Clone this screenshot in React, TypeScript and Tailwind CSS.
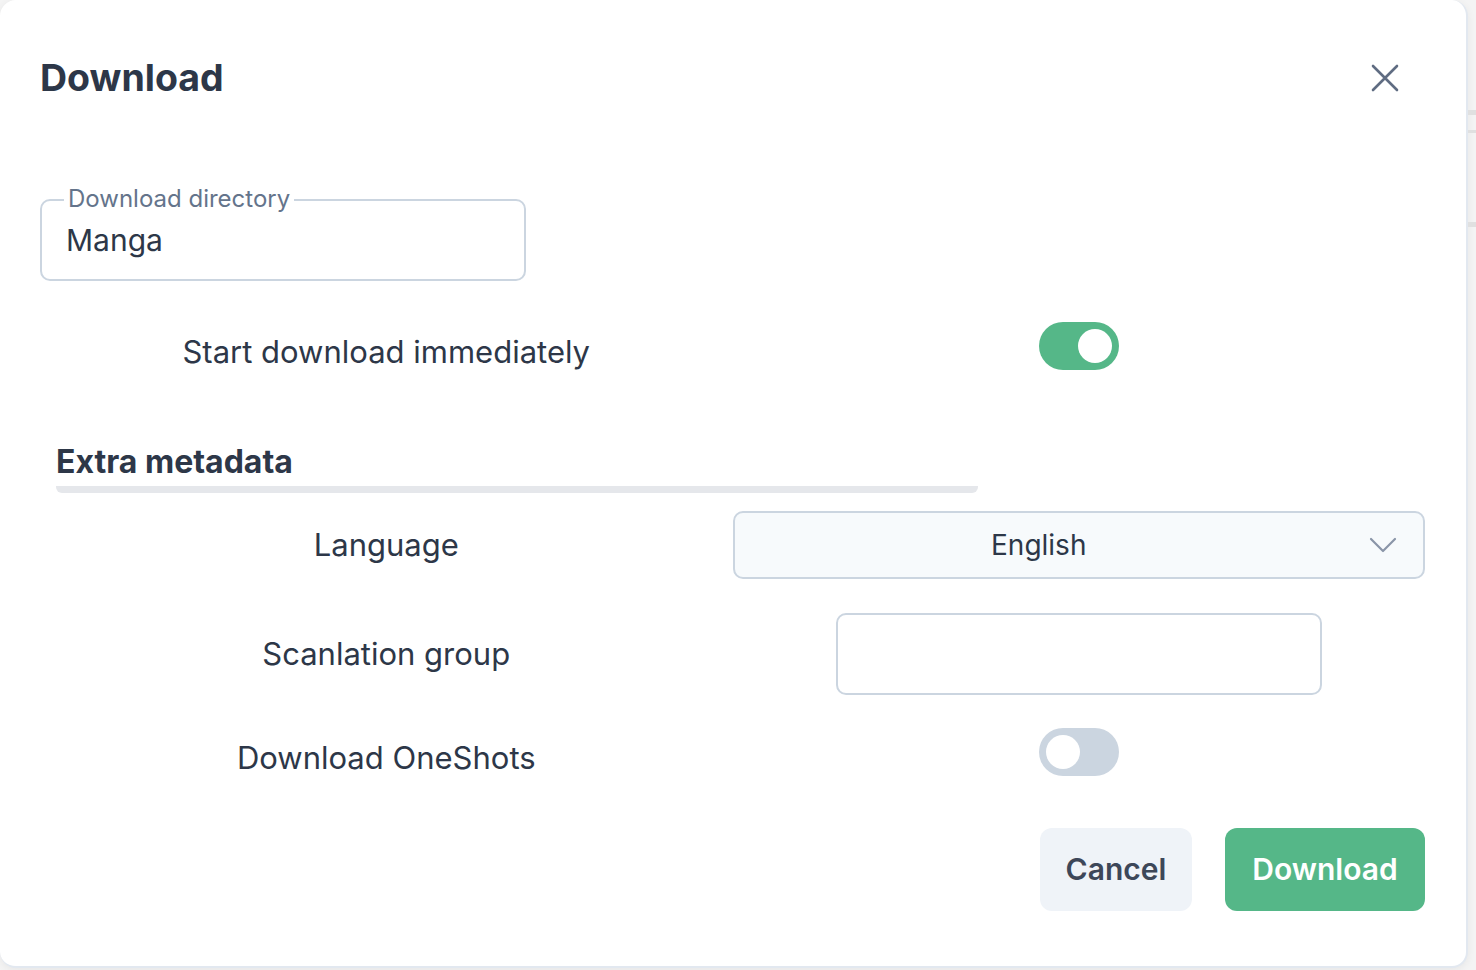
import React from "react";

function Toggle({ on }: { on: boolean }) {
  return (
    <div
      className={`w-[80px] h-[48px] rounded-full p-[7px] flex items-center ${
        on ? "bg-[#55b788] justify-end" : "bg-[#cbd5e0] justify-start"
      }`}
    >
      <div className="w-[34px] h-[34px] rounded-full bg-white" />
    </div>
  );
}

function Row({ label, children, shift = false }: { label: string; children: React.ReactNode; shift?: boolean }) {
  return (
    <div className="grid grid-cols-2 items-center">
      <div className={`text-center text-[31px] text-[#2d3748] leading-[36px] ${shift ? "pt-[12px]" : ""}`}>{label}</div>
      <div className="flex justify-center">{children}</div>
    </div>
  );
}

export default function App() {
  return (
    <div className="w-[1476px] h-[970px] bg-[#f4f4f4] flex font-['Inter',sans-serif] overflow-hidden">
      {/* Modal */}
      <div className="w-[1468px] h-[968px] bg-white rounded-[16px] border-r-2 border-b-2 border-[#e2e8f0] shadow-[0_2px_8px_rgba(0,0,0,0.06)] flex flex-col pl-[40px] pr-[41px] flex-shrink-0">
        {/* Header */}
        <div className="h-[156px] flex items-center justify-between">
          <h1 className="text-[37.5px] font-bold text-[#2d3748] leading-none">Download</h1>
          <button className="w-[40px] h-[40px] flex items-center justify-center mr-[20px] text-[#5f6c82]">
            <svg width="28" height="28" viewBox="0 0 28 28" fill="none" stroke="currentColor" strokeWidth="2.6" strokeLinecap="round">
              <path d="M2 2L26 26M26 2L2 26" />
            </svg>
          </button>
        </div>

        {/* Download directory */}
        <div className="relative mt-[43px] w-[486px] h-[82px] border-2 border-[#cbd5e0] rounded-[10px] flex items-center pl-[24px]">
          <span className="absolute -top-[16px] left-[22px] bg-white px-[4px] text-[24px] leading-[28px] text-[#64748b]">
            Download directory
          </span>
          <span className="text-[30px] text-[#2d3748]">Manga</span>
        </div>

        {/* Start immediately */}
        <div className="mt-[41px]">
          <Row label="Start download immediately" shift>
            <Toggle on />
          </Row>
        </div>

        {/* Extra metadata */}
        <div className="mt-[73px] ml-[16px]">
          <h2 className="text-[32px] font-bold text-[#2d3748] leading-[37px]">Extra metadata</h2>
          <div className="mt-[6px] w-[922px] h-[7px] bg-[#e5e7eb] rounded-b-[6px]" />
        </div>

        {/* Language */}
        <div className="mt-[18px]">
          <Row label="Language">
            <div className="w-[692px] h-[68px] bg-[#f7fafc] border-2 border-[#cbd5e0] rounded-[10px] flex items-center relative">
              <span className="flex-1 text-center text-[28px] text-[#2d3748] pr-[80px]">English</span>
              <svg className="absolute right-[26px]" width="28" height="16" viewBox="0 0 28 16" fill="none" stroke="#8a95a8" strokeWidth="2.2" strokeLinecap="round" strokeLinejoin="round">
                <path d="M2 2L14 14L26 2" />
              </svg>
            </div>
          </Row>
        </div>

        {/* Scanlation group */}
        <div className="mt-[34px]">
          <Row label="Scanlation group">
            <div className="w-[486px] h-[82px] border-2 border-[#cbd5e0] rounded-[10px] bg-white" />
          </Row>
        </div>

        {/* OneShots */}
        <div className="mt-[33px]">
          <Row label="Download OneShots" shift>
            <Toggle on={false} />
          </Row>
        </div>

        {/* Footer */}
        <div className="mt-[52px] flex justify-end gap-[33px]">
          <button className="w-[152px] h-[83px] rounded-[12px] bg-[#eff3f8] text-[30px] font-semibold text-[#3d4759]">
            Cancel
          </button>
          <button className="w-[200px] h-[83px] rounded-[12px] bg-[#55b788] text-[30px] font-semibold text-white">
            Download
          </button>
        </div>
      </div>

      {/* Page behind */}
      <div className="flex-1 flex flex-col">
        <div className="mt-[110px] h-[5px] bg-[#e0e0e0]" />
        <div className="mt-[15px] h-[3px] bg-[#e0e0e0]" />
        <div className="mt-[89px] h-[5px] bg-[#e0e0e0]" />
      </div>
    </div>
  );
}
